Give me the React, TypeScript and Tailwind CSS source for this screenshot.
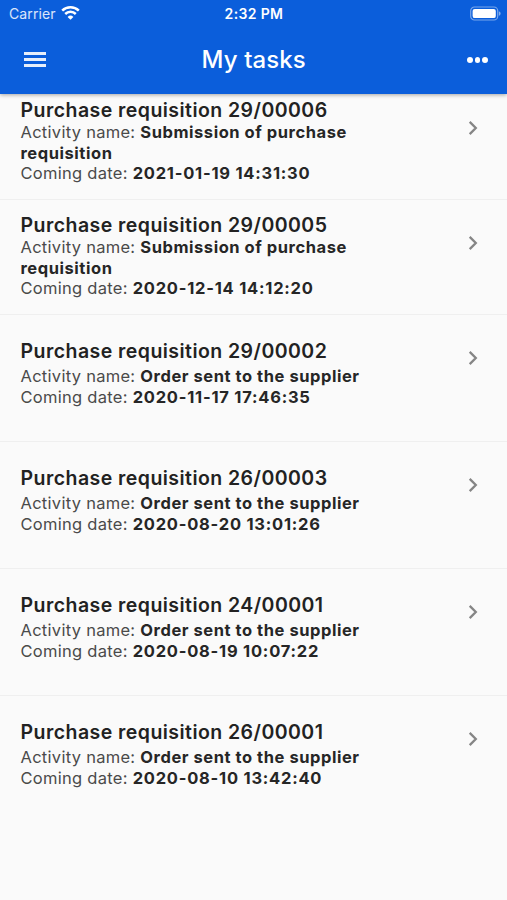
import clsx from "clsx";

type Task = {
  number: string;
  activity: string;
  date: string;
  tall?: boolean;
};

const tasks: Task[] = [
  { number: "29/00006", activity: "Submission of purchase requisition", date: "2021-01-19 14:31:30" },
  { number: "29/00005", activity: "Submission of purchase requisition", date: "2020-12-14 14:12:20" },
  { number: "29/00002", activity: "Order sent to the supplier", date: "2020-11-17 17:46:35", tall: true },
  { number: "26/00003", activity: "Order sent to the supplier", date: "2020-08-20 13:01:26", tall: true },
  { number: "24/00001", activity: "Order sent to the supplier", date: "2020-08-19 10:07:22", tall: true },
  { number: "26/00001", activity: "Order sent to the supplier", date: "2020-08-10 13:42:40", tall: true },
];

function WifiIcon() {
  return (
    <svg width="19" height="14" viewBox="0 0 19 14" fill="none" stroke="currentColor" className="-ml-px -mt-px">
      <path d="M1.2 4.7a11.9 11.9 0 0 1 16.6 0" strokeWidth="2.5" />
      <path d="M4.2 8a7.6 7.6 0 0 1 10.6 0" strokeWidth="2.5" />
      <path d="M9.5 13.8 6.6 10.9a4.2 4.2 0 0 1 5.8 0z" fill="currentColor" stroke="none" />
    </svg>
  );
}

function BatteryIcon() {
  return (
    <svg width="31" height="15" viewBox="0 0 31 15" fill="none">
      <rect x="0.7" y="1" width="27" height="13" rx="3.8" stroke="white" strokeOpacity="0.45" strokeWidth="1.2" />
      <rect x="2.6" y="2.9" width="23.2" height="9.2" rx="2.2" fill="white" />
      <path d="M28.9 5.2c1.1.4 1.7 1.3 1.7 2.3s-.6 1.9-1.7 2.3z" fill="white" fillOpacity="0.5" />
    </svg>
  );
}

function StatusBar() {
  return (
    <div className="grid h-[27px] grid-cols-3 items-center pl-[9px] pr-[8px] text-[14px]">
      <div className="flex items-center gap-[6px]">
        <span className="tracking-[0.1px] text-white/85">Carrier</span>
        <WifiIcon />
      </div>
      <span className="text-center font-semibold tracking-[0.35px]">2:32 PM</span>
      <div className="-mr-[2px] flex justify-end">
        <BatteryIcon />
      </div>
    </div>
  );
}

function AppBar() {
  return (
    <div className="flex h-[66px] items-center justify-between pl-6 pr-[19px]">
      <button aria-label="Menu" className="-mt-px flex w-[22px] flex-col gap-[3px]">
        <span className="h-[3px] bg-white/90" />
        <span className="h-[3px] bg-white/90" />
        <span className="h-[3px] bg-white/90" />
      </button>
      <h1 className="-ml-[6px] text-[24px] font-medium tracking-[0.1px]">My tasks</h1>
      <button aria-label="More" className="flex gap-[2px]">
        <span className="size-[5.5px] rounded-full bg-white" />
        <span className="size-[5.5px] rounded-full bg-white" />
        <span className="size-[5.5px] rounded-full bg-white" />
      </button>
    </div>
  );
}

function TaskRow({ task }: { task: Task }) {
  return (
    <li
      className={clsx(
        "flex items-start justify-between border-b border-[#efefef] pl-[20.5px] pr-[29px] last:border-transparent",
        task.tall ? "h-[127px] pt-[23.5px]" : "h-[115px] pt-[13px]"
      )}
    >
      <div
        className={clsx(
          "w-[350px] text-[16.5px] tracking-[0.28px] text-[#4a4a4a]",
          task.tall ? "leading-[21px]" : "leading-[20.5px]"
        )}
      >
        <h2
          className={clsx(
            "text-[19.5px] font-semibold leading-[24px] tracking-[0.45px] text-[#222]",
            task.tall && "mb-[3px]"
          )}
        >
          Purchase requisition {task.number}
        </h2>
        <p>
          Activity name: <b className="font-bold tracking-[0.55px] text-[#262626]">{task.activity}</b>
        </p>
        <p>
          Coming date: <b className="font-bold tracking-[0.76px] text-[#262626]">{task.date}</b>
        </p>
      </div>
      <svg
        width="10"
        height="16"
        viewBox="0 0 10 16"
        fill="none"
        stroke="#858585"
        strokeWidth="2.3"
        className={task.tall ? "mt-[11.5px]" : "mt-[22px]"}
      >
        <path d="M1.7 1.9 7.8 8 1.7 14.1" />
      </svg>
    </li>
  );
}

export default function App() {
  return (
    <div className="h-[900px] w-full overflow-hidden bg-[#fafafa] font-['Inter',sans-serif]">
      <header className="relative z-10 h-[94px] bg-[#0b5edb] text-white shadow-[0_1px_4px_rgba(0,0,0,0.35)]">
        <StatusBar />
        <AppBar />
      </header>
      {/* list is scrolled slightly under the header */}
      <ul className="-mt-[9px]">
        {tasks.map((task) => (
          <TaskRow key={task.date} task={task} />
        ))}
      </ul>
    </div>
  );
}
